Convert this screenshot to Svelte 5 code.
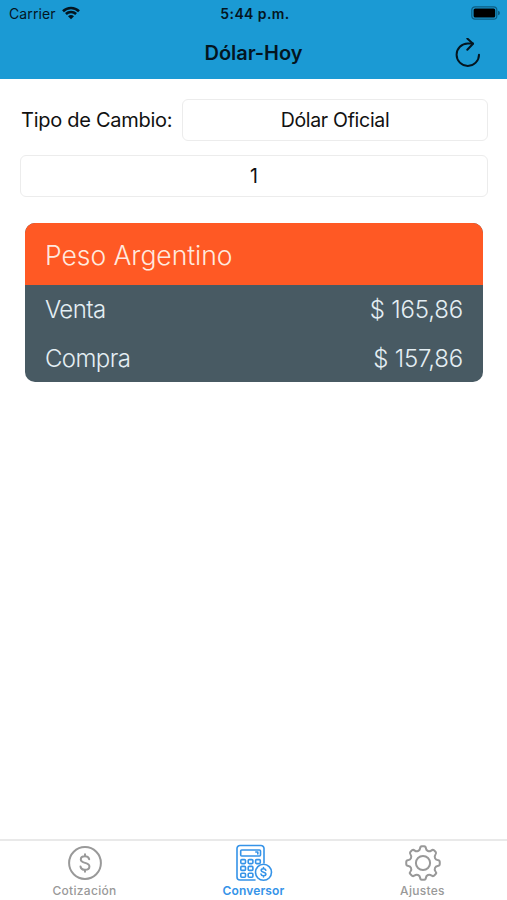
<script lang="ts">
	const rates: { label: string; value: string }[] = [
		{ label: 'Venta', value: '$ 165,86' },
		{ label: 'Compra', value: '$ 157,86' }
	];

	const tabs: { id: string; label: string }[] = [
		{ id: 'rates', label: 'Cotización' },
		{ id: 'converter', label: 'Conversor' },
		{ id: 'settings', label: 'Ajustes' }
	];

	let activeTab: string = $state('converter');
	let amount: string = $state('1');

	const point = (radius: number, degrees: number) => {
		const angle = (degrees * Math.PI) / 180;
		return `${(18 + radius * Math.sin(angle)).toFixed(2)} ${(18 - radius * Math.cos(angle)).toFixed(2)}`;
	};

	// One tooth every 45 degrees, with a scooped valley in between
	const gearPath =
		Array.from({ length: 8 }, (_, i) => {
			const a = i * 45;
			return `${i ? 'L' : 'M'}${point(14.8, a - 11.5)} Q${point(16.8, a - 10)} ${point(16.8, a - 4)} L${point(16.8, a + 4)} Q${point(16.8, a + 10)} ${point(14.8, a + 11.5)} C${point(12.6, a + 15)} ${point(12.6, a + 30)} ${point(14.8, a + 33.5)}`;
		}).join(' ') + 'Z';

	const keys = [0, 1, 2].flatMap((row) => [0, 1, 2].map((col) => ({ row, col }))).filter(
		({ row, col }) => row === 0 || col < 2
	);
</script>

<div class="screen">
	<header>
		<div class="status">
			<div class="carrier">
				<span>Carrier</span>
				<svg width="18" height="14" viewBox="0 0 18 14">
					<path d="M1 5.2a11.6 11.6 0 0 1 16 0" />
					<path d="M3.9 8a7.4 7.4 0 0 1 10.2 0" />
					<path class="dot" d="M9 13.3 6 10.3a4.4 4.4 0 0 1 6 0Z" />
				</svg>
			</div>
			<div class="time">5:44 p.m.</div>
			<svg class="battery" width="30" height="14" viewBox="0 0 30 14">
				<rect class="shell" x="0.8" y="0.8" width="25" height="12.4" rx="3.2" />
				<rect x="2.6" y="2.5" width="21.6" height="9" rx="1.6" />
				<path class="cap" d="M27 4.8q2 .5 2 2.2t-2 2.2Z" />
			</svg>
		</div>
		<div class="nav">
			<h1>Dólar-Hoy</h1>
			<button class="refresh" aria-label="Actualizar">
				<svg width="26" height="30" viewBox="0 0 26 30">
					<path d="M24 16.7A11.2 11.2 0 1 1 12.8 5.5H18" />
					<path d="M12.3 .5 18 5.800l-5.700 6" />
				</svg>
			</button>
		</div>
	</header>

	<main>
		<div class="row">
			<span class="label">Tipo de Cambio:</span>
			<button class="field">Dólar Oficial</button>
		</div>
		<input class="field" aria-label="Monto" bind:value={amount} />

		<section class="card">
			<h2>Peso Argentino</h2>
			{#each rates as { label, value }}
				<div class="rate">
					<span>{label}</span>
					<span class="value">{value}</span>
				</div>
			{/each}
		</section>
	</main>

	<nav class="tabs">
		{#each tabs as { id, label }}
			<button class="tab {id}" class:active={activeTab === id} onclick={() => (activeTab = id)}>
				<svg width="36" height="36" viewBox="0 0 36 36">
					{#if id === 'rates'}
						<circle cx="18" cy="18" r="15.9" />
						<path d="M22.200 14.300c-.4-2-2-3-4.200-3-2.500 0-4.200 1.300-4.200 3.200 0 4.600 8.600 2.200 8.600 7 0 2-1.800 3.300-4.400 3.300-2.500 0-4.200-1.200-4.500-3.300M18 9.200v2M18 24.800v2" />
					{:else if id === 'converter'}
						<path d="M19 35H4a3 3 0 0 1-3-3V3.500a3 3 0 0 1 3-3h21a3 3 0 0 1 3 3V18" />
						<rect x="4.700" y="5" width="19.800" height="6" rx="1" />
						<path d="M19.800 7h2v2" />
						{#each keys as { row, col }}
							<rect x={4.8 + col * 7.4} y={14.6 + row * 6.8} width="4.700" height="4" rx="1" />
						{/each}
						<circle cx="27.500" cy="27.300" r="8" />
						<path d="M29.800 25.200c-.3-1-1.200-1.400-2.300-1.400-1.300 0-2.300.6-2.300 1.600 0 2.400 4.700 1.300 4.700 3.700 0 1.100-1 1.700-2.400 1.700s-2.300-.6-2.500-1.700M27.500 22.600v1.200M27.500 30.800v1.200" />
					{:else}
						<path d={gearPath} />
						<circle cx="18" cy="18" r="7.100" />
					{/if}
				</svg>
				<span>{label}</span>
			</button>
		{/each}
	</nav>
</div>

<style>
	:global(body) {
		background: #fff;
	}
	.screen {
		display: flex;
		flex-direction: column;
		height: 100vh;
		font-family: Inter, 'Liberation Sans', sans-serif;
		color: #111;
	}
	button {
		padding: 0;
		border: 0;
		background: none;
		font: inherit;
		color: inherit;
	}
	svg {
		display: block;
		fill: none;
		stroke: currentColor;
		stroke-linecap: round;
		stroke-linejoin: round;
	}

	header {
		box-sizing: border-box;
		height: 79px;
		background: #1b9ad4;
		color: #04151f;
	}
	.status {
		display: grid;
		grid-template-columns: 1fr auto 1fr;
		align-items: center;
		height: 27px;
		padding: 0 6px 0 9px;
		font-size: 14px;
		line-height: 27px;
	}
	.carrier {
		display: flex;
		align-items: center;
		gap: 6px;
		letter-spacing: 0.1px;
	}
	.carrier svg {
		margin-top: -2px;
		stroke-width: 2.6;
		stroke-linecap: butt;
	}
	.carrier .dot {
		fill: currentColor;
		stroke: none;
	}
	.time {
		font-weight: 600;
		letter-spacing: 0.4px;
	}
	.battery {
		justify-self: end;
		margin-top: -1px;
		stroke: none;
		fill: #000;
	}
	.battery .shell {
		fill: none;
		stroke: #0c5e83;
		stroke-width: 1.2;
	}
	.battery .cap {
		fill: #0c5e83;
	}
	.nav {
		display: grid;
		grid-template-columns: 1fr auto 1fr;
		align-items: center;
		height: 51px;
		padding: 0 26px;
	}
	h1 {
		grid-column: 2;
		margin: 0;
		font-size: 20px;
		font-weight: 600;
		letter-spacing: -0.05px;
	}
	.refresh {
		justify-self: end;
	}
	.refresh svg {
		stroke-width: 2;
	}

	main {
		flex: 1;
		display: flex;
		flex-direction: column;
		padding: 20px 19px 0 20px;
	}
	.row {
		display: flex;
		align-items: center;
		gap: 10px;
		margin-bottom: 14px;
	}
	.label {
		width: 152px;
		padding-left: 1px;
		box-sizing: border-box;
		white-space: nowrap;
		font-size: 20px;
		letter-spacing: -0.27px;
	}
	.field {
		box-sizing: border-box;
		height: 42px;
		border: 1px solid #ececec;
		border-radius: 6px;
		background: #fff;
		color: #111;
		font-family: inherit;
		font-size: 19.5px;
		text-align: center;
	}
	.row .field {
		flex: 1;
		letter-spacing: -0.3px;
	}

	.card {
		margin: 26px 5px 0;
		border-radius: 10px;
		overflow: hidden;
		background: #485a63;
		color: #e4eef3;
		font-weight: 300;
	}
	h2 {
		height: 62px;
		margin: 0;
		padding: 0 20px;
		background: #ff5924;
		color: #ffe9df;
		font-size: 26.5px;
		font-weight: 300;
		line-height: 64px;
		letter-spacing: -0.03px;
	}
	.rate {
		display: flex;
		justify-content: space-between;
		height: 48.5px;
		padding: 0 20px;
		font-size: 24px;
		line-height: 50px;
		letter-spacing: -0.6px;
	}
	.value {
		letter-spacing: -0.2px;
	}

	.tabs {
		display: grid;
		grid-template-columns: repeat(3, 1fr);
		box-sizing: border-box;
		height: 61px;
		border-top: 2px solid #e9e9e9;
	}
	.tab {
		display: flex;
		flex-direction: column;
		align-items: center;
		padding-top: 4px;
		color: #999;
		font-size: 12px;
		font-weight: 500;
		line-height: 18px;
		letter-spacing: 0.3px;
	}
	.tab svg {
		flex: none;
		margin-bottom: 1px;
		overflow: visible;
		stroke-width: 2;
	}
	.tab.converter svg {
		stroke-width: 1.6;
	}
	.tab.active {
		color: #3593e8;
		font-weight: 600;
		letter-spacing: 0.15px;
	}
</style>
